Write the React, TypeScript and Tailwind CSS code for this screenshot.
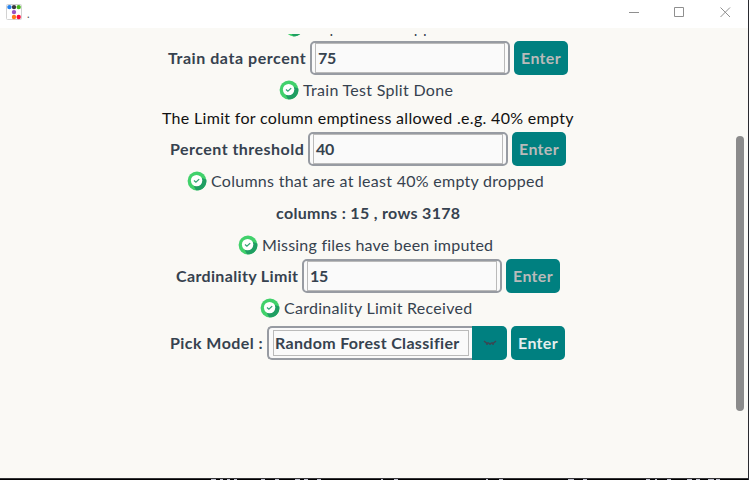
import React from "react";

const taskbarSpecks = [
  [211, 5], [220, 3], [227, 3], [234, 3], [261, 4], [275, 4], [295, 5], [304, 4],
  [317, 4], [381, 2], [394, 4], [486, 2], [499, 4], [568, 6], [583, 4], [646, 4],
  [655, 2], [667, 4], [687, 5], [696, 4], [708, 6], [716, 4],
];

function Check() {
  return (
    <svg width="20" height="20" viewBox="0 0 20 20" className="shrink-0">
      <circle cx="10" cy="10" r="9.4" fill="#41d16b" />
      <path d="M19.300 8.500A9.400 9.400 0 0 1 9 19.300L7 15.500 15 7Z" fill="#1f9e62" />
      <circle cx="9.6" cy="9.6" r="5.7" fill="#fff" />
      <path d="M7 9.500l1.900 1.700 3.300-3.100" fill="none" stroke="#32a374" strokeWidth="1.3" />
    </svg>
  );
}

function Status({ text, className }: { text: string; className: string }) {
  return (
    <div className={`flex h-5 items-center ${className}`}>
      <Check />
      <span className="ml-1">{text}</span>
    </div>
  );
}

function EnterButton({ active = false }: { active?: boolean }) {
  return (
    <button className={`ml-1 h-[34px] w-[54px] shrink-0 rounded-[5px] bg-[#008080] text-center font-bold tracking-[0.3px] ${active ? "text-[#e4eeee]" : "text-[#bababa]"}`}>
      Enter
    </button>
  );
}

function Entry({ label, value, className, labelClass }: { label: string; value: string; className: string; labelClass: string }) {
  return (
    <div className={`flex h-[34px] items-center font-bold ${className}`}>
      <span className={`shrink-0 ${labelClass}`}>{label}</span>
      <div className="h-[34px] w-[200px] shrink-0 rounded-[5px] border-2 border-[#979ba2] bg-[#fafafa] px-[3px]">
        <div className="flex h-full items-center border border-[#bababa] pl-0.5 tracking-[-0.2px]">{value}</div>
      </div>
      <EnterButton />
    </div>
  );
}

export default function App() {
  return (
    <div className="relative flex h-[480px] w-[749px] flex-col overflow-hidden border-r border-[#292a30] bg-[#faf9f5] font-['Lato','Liberation_Sans',sans-serif] text-[16px] leading-5 whitespace-nowrap text-[#36424f]">
      <header className="flex h-7 shrink-0 items-center bg-white pl-1.5">
        <svg width="16" height="16" viewBox="0 0 16 16" className="-mt-1">
          <rect x=".5" y=".5" width="15" height="15" rx="1" fill="#fff" stroke="#d2d2d2" />
          <circle cx="3.4" cy="3.1" r="2.2" fill="#2582ed" />
          <circle cx="8" cy="3.1" r="2.2" fill="#3a3a40" />
          <circle cx="12.700" cy="3.1" r="2.2" fill="#45b51c" />
          <circle cx="8" cy="8.1" r="2.2" fill="#9851c4" />
          <circle cx="8" cy="13" r="2.2" fill="#ff7a1b" />
          <circle cx="12.700" cy="13" r="2.2" fill="#fa0b3d" />
        </svg>
        <span className="ml-[5px] text-[11px] text-[#555]">.</span>
        <svg width="104" height="12" viewBox="0 0 104 12" className="-mt-1 mr-4 ml-auto" fill="none" stroke="#8f8f8f">
          <path d="M1 6.500h10M46.500 1.500h9v9h-9zM92.500 1.500l9.500 9.500M102 1.500l-9.500 9.500" />
        </svg>
      </header>

      <div className="flex grow overflow-hidden pt-1.5">
        <main className="flex w-[736px] shrink-0 flex-col">
          <div className="h-[7px] shrink-0 overflow-hidden">
            <Status text="Duplicates dropped" className="-mt-[17px] ml-[284px] tracking-[0.28px]" />
          </div>
          <Entry label="Train data percent" value="75" className="ml-[168px]" labelClass="w-[142px] tracking-[0.55px]" />
          <Status text="Train Test Split Done" className="mt-[5px] ml-[279px] tracking-[0.3px]" />
          <p className="mt-2 ml-[162px] h-5 tracking-[0.31px] text-[#111]">The Limit for column emptiness allowed .e.g. 40% empty</p>
          <Entry label="Percent threshold" value="40" className="mt-1 ml-[170px]" labelClass="w-[138px] tracking-[0.47px]" />
          <Status text="Columns that are at least 40% empty dropped" className="mt-[5px] ml-[187px] tracking-[0.28px]" />
          <p className="mt-3 ml-[276px] h-5 font-bold tracking-[0.32px]">columns : 15 , rows 3178</p>
          <Status text="Missing files have been imputed" className="mt-3 ml-[238px] tracking-[0.22px]" />
          <Entry label="Cardinality Limit" value="15" className="mt-1 ml-[176px]" labelClass="w-[126px] tracking-[0.35px]" />
          <Status text="Cardinality Limit Received" className="mt-[5px] ml-[260px] tracking-[0.28px]" />
          <div className="mt-2 ml-[170px] flex h-[34px] items-center font-bold">
            <span className="w-[97px] tracking-[0.45px]">Pick Model :</span>
            <div className="flex h-[34px] w-[240px]">
              <div className="w-[205px] rounded-l-[5px] border-2 border-r-0 border-[#979ba2] bg-[#fafafa] py-0.5 pr-[3px] pl-1">
                <div className="flex h-full items-center border border-[#bababa] pl-px tracking-[0.33px]">Random Forest Classifier</div>
              </div>
              <div className="flex w-[35px] items-center justify-center rounded-r-[5px] bg-[#008080]">
                <svg width="14" height="6" viewBox="0 0 14 6">
                  <path d="M1 1l2.500 2h2l1.500 1 1.500-1h2L13 1M4 3v2M10 3v2M6 4h2" fill="none" stroke="#3b4652" strokeWidth="1.500" />
                </svg>
              </div>
            </div>
            <EnterButton active />
          </div>
        </main>
        <div className="mt-[102px] h-[275px] w-2 shrink-0 rounded-[4px] bg-[#8b8b8b]" />
      </div>
      <footer className="h-0.5 shrink-0 border-t border-[#333336] bg-black">
        <svg width="748" height="1" className="block">
          {taskbarSpecks.map(([x, w]) => (
            <rect key={x} x={x} y="0" width={w} height="1" fill="#bfc0cc" />
          ))}
        </svg>
      </footer>
      <svg width="1" height="480" className="absolute top-0 -right-px">
        <rect y="25" width="1" height="5" fill="#b57a2c" />
        <rect y="157" width="1" height="7" fill="#1c8fd0" />
        <rect y="403" width="1" height="8" fill="#3b8fb8" />
      </svg>
    </div>
  );
}
